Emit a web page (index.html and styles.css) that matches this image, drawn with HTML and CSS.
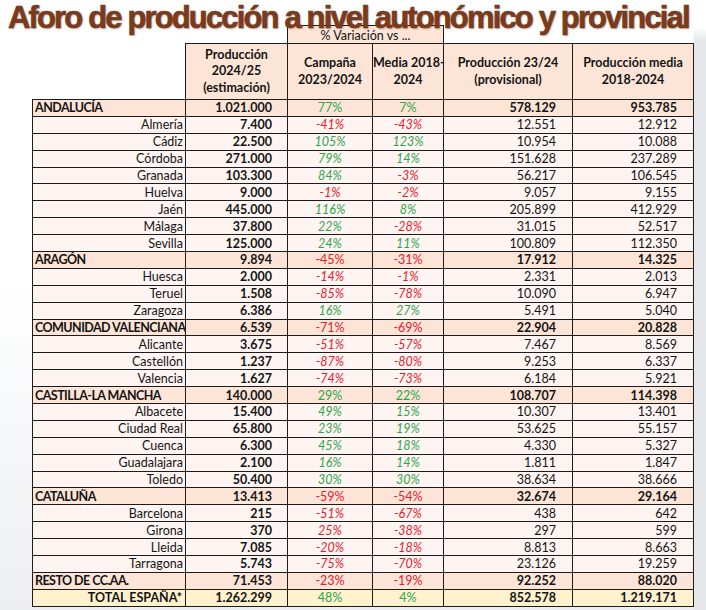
FILE: index.html
```html
<!DOCTYPE html>
<html lang="es">
<head>
<meta charset="utf-8">
<title>Aforo de producción</title>
<link rel="stylesheet" href="styles.css">
</head>
<body>
<h1 class="title">Aforo de producción a nivel autonómico y provincial</h1>
<table class="aforo">
  <colgroup>
    <col class="c-name"><col class="c-prod"><col class="c-camp"><col class="c-media"><col class="c-p2324"><col class="c-pmed">
  </colgroup>
  <thead>
    <tr class="h1row">
      <th class="blank"></th>
      <th class="blank"></th>
      <th class="var" colspan="2">% Variación vs ...</th>
      <th class="blank"></th>
      <th class="blank"></th>
    </tr>
    <tr class="h2row">
      <th class="blank"></th>
      <th>Producción<br>2024/25<br>(estimación)</th>
      <th>Campaña<br>2023/2024</th>
      <th>Media 2018-<br>2024</th>
      <th>Producción 23/24<br>(provisional)</th>
      <th>Producción media<br>2018-2024</th>
    </tr>
  </thead>
  <tbody>
    <tr class="reg"><td>ANDALUCÍA</td><td>1.021.000</td><td class="g">77%</td><td class="g">7%</td><td>578.129</td><td>953.785</td></tr>
    <tr class="prov"><td>Almería</td><td>7.400</td><td class="r">-41%</td><td class="r">-43%</td><td>12.551</td><td>12.912</td></tr>
    <tr class="prov"><td>Cádiz</td><td>22.500</td><td class="g">105%</td><td class="g">123%</td><td>10.954</td><td>10.088</td></tr>
    <tr class="prov"><td>Córdoba</td><td>271.000</td><td class="g">79%</td><td class="g">14%</td><td>151.628</td><td>237.289</td></tr>
    <tr class="prov"><td>Granada</td><td>103.300</td><td class="g">84%</td><td class="r">-3%</td><td>56.217</td><td>106.545</td></tr>
    <tr class="prov"><td>Huelva</td><td>9.000</td><td class="r">-1%</td><td class="r">-2%</td><td>9.057</td><td>9.155</td></tr>
    <tr class="prov"><td>Jaén</td><td>445.000</td><td class="g">116%</td><td class="g">8%</td><td>205.899</td><td>412.929</td></tr>
    <tr class="prov"><td>Málaga</td><td>37.800</td><td class="g">22%</td><td class="r">-28%</td><td>31.015</td><td>52.517</td></tr>
    <tr class="prov"><td>Sevilla</td><td>125.000</td><td class="g">24%</td><td class="g">11%</td><td>100.809</td><td>112.350</td></tr>
    <tr class="reg"><td>ARAGÓN</td><td>9.894</td><td class="r">-45%</td><td class="r">-31%</td><td>17.912</td><td>14.325</td></tr>
    <tr class="prov"><td>Huesca</td><td>2.000</td><td class="r">-14%</td><td class="r">-1%</td><td>2.331</td><td>2.013</td></tr>
    <tr class="prov"><td>Teruel</td><td>1.508</td><td class="r">-85%</td><td class="r">-78%</td><td>10.090</td><td>6.947</td></tr>
    <tr class="prov"><td>Zaragoza</td><td>6.386</td><td class="g">16%</td><td class="g">27%</td><td>5.491</td><td>5.040</td></tr>
    <tr class="reg"><td>COMUNIDAD VALENCIANA</td><td>6.539</td><td class="r">-71%</td><td class="r">-69%</td><td>22.904</td><td>20.828</td></tr>
    <tr class="prov"><td>Alicante</td><td>3.675</td><td class="r">-51%</td><td class="r">-57%</td><td>7.467</td><td>8.569</td></tr>
    <tr class="prov"><td>Castellón</td><td>1.237</td><td class="r">-87%</td><td class="r">-80%</td><td>9.253</td><td>6.337</td></tr>
    <tr class="prov"><td>Valencia</td><td>1.627</td><td class="r">-74%</td><td class="r">-73%</td><td>6.184</td><td>5.921</td></tr>
    <tr class="reg"><td>CASTILLA-LA MANCHA</td><td>140.000</td><td class="g">29%</td><td class="g">22%</td><td>108.707</td><td>114.398</td></tr>
    <tr class="prov"><td>Albacete</td><td>15.400</td><td class="g">49%</td><td class="g">15%</td><td>10.307</td><td>13.401</td></tr>
    <tr class="prov"><td>Ciudad Real</td><td>65.800</td><td class="g">23%</td><td class="g">19%</td><td>53.625</td><td>55.157</td></tr>
    <tr class="prov"><td>Cuenca</td><td>6.300</td><td class="g">45%</td><td class="g">18%</td><td>4.330</td><td>5.327</td></tr>
    <tr class="prov"><td>Guadalajara</td><td>2.100</td><td class="g">16%</td><td class="g">14%</td><td>1.811</td><td>1.847</td></tr>
    <tr class="prov"><td>Toledo</td><td>50.400</td><td class="g">30%</td><td class="g">30%</td><td>38.634</td><td>38.666</td></tr>
    <tr class="reg"><td>CATALUÑA</td><td>13.413</td><td class="r">-59%</td><td class="r">-54%</td><td>32.674</td><td>29.164</td></tr>
    <tr class="prov"><td>Barcelona</td><td>215</td><td class="r">-51%</td><td class="r">-67%</td><td>438</td><td>642</td></tr>
    <tr class="prov"><td>Girona</td><td>370</td><td class="r">25%</td><td class="r">-38%</td><td>297</td><td>599</td></tr>
    <tr class="prov"><td>Lleida</td><td>7.085</td><td class="r">-20%</td><td class="r">-18%</td><td>8.813</td><td>8.663</td></tr>
    <tr class="prov"><td>Tarragona</td><td>5.743</td><td class="r">-75%</td><td class="r">-70%</td><td>23.126</td><td>19.259</td></tr>
    <tr class="reg"><td>RESTO DE CC.AA.</td><td>71.453</td><td class="r">-23%</td><td class="r">-19%</td><td>92.252</td><td>88.020</td></tr>
    <tr class="tot"><td>TOTAL ESPAÑA*</td><td>1.262.299</td><td class="g">48%</td><td class="g">4%</td><td>852.578</td><td>1.219.171</td></tr>
  </tbody>
</table>
</body>
</html>
```
FILE: styles.css
```css
html, body {
  margin: 0;
  padding: 0;
}
body {
  width: 706px;
  height: 610px;
  overflow: hidden;
  background:
    linear-gradient(to bottom, #ffffff 0, #ffffff 28px, rgba(255,255,255,0) 40px),
    linear-gradient(to right, rgba(0,0,0,0) 0, rgba(0,0,0,0) 693px, #e5e7ea 694px),
    linear-gradient(to bottom, #ffffff 0, #ffffff 45%, #eceef1 100%);
  font-family: Lato, "Open Sans", sans-serif;
  color: #141414;
}
.title {
  position: relative;
  z-index: 1;
  margin: 0;
  height: 25px;
  padding-left: 8px;
  font-family: "Liberation Sans", Arial, sans-serif;
  font-weight: 700;
  font-size: 31px;
  line-height: 35px;
  letter-spacing: -1.85px;
  color: #7a3a1b;
  -webkit-text-stroke: 0.7px #7a3a1b;
  white-space: nowrap;
  text-shadow: 1px 1px 2px rgba(0, 0, 0, 0.3);
}
.aforo {
  margin-left: 32px;
  border-collapse: collapse;
  table-layout: fixed;
  width: 661px;
  font-size: 12.5px;
}
.c-name { width: 153px; }
.c-prod { width: 102px; }
.c-camp { width: 85px; }
.c-media { width: 71px; }
.c-p2324 { width: 129px; }
.c-pmed { width: 121px; }

.aforo th {
  font-weight: 700;
  text-align: center;
  background: #fce4d6;
  border: 1px solid #1c1c1c;
  padding: 0;
  line-height: 16.6px;
  white-space: nowrap;
}
.aforo th.blank {
  background: transparent;
  border: none;
}
.h1row { height: 18px; }
.h1row th.var {
  font-weight: 400;
  font-size: 12.5px;
  line-height: 15px;
  vertical-align: bottom;
}
.h2row { height: 56px; }

.aforo td {
  border: 1px solid #1c1c1c;
  padding: 0 15px 0 0;
  text-align: right;
  line-height: 15px;
  white-space: nowrap;
  overflow: hidden;
}
.aforo tbody tr { height: 16.9px; }
.aforo td:nth-child(1) { padding: 0 2px; }
.aforo td:nth-child(2) { font-weight: 700; padding-right: 15px; }
.aforo td:nth-child(3),
.aforo td:nth-child(4) { text-align: center; padding: 0; }
.aforo td:nth-child(5),
.aforo td:nth-child(6) { padding-right: 16px; }

.reg td { background: #fce4d6; }
.reg td:nth-child(1) { text-align: left; font-weight: 700; letter-spacing: -0.55px; }
.reg td:nth-child(5),
.reg td:nth-child(6) { font-weight: 700; }

.prov td { background: #fef4f1; }
.prov td.g, .prov td.r { font-style: italic; }

.tot td { background: #fff2cc; font-weight: 700; }
.tot td:nth-child(1) { padding-right: 3px; }
.tot td.g, .tot td.r { font-weight: 400; }

td.g { color: #2ea44f; }
td.r { color: #e3202b; }
```
